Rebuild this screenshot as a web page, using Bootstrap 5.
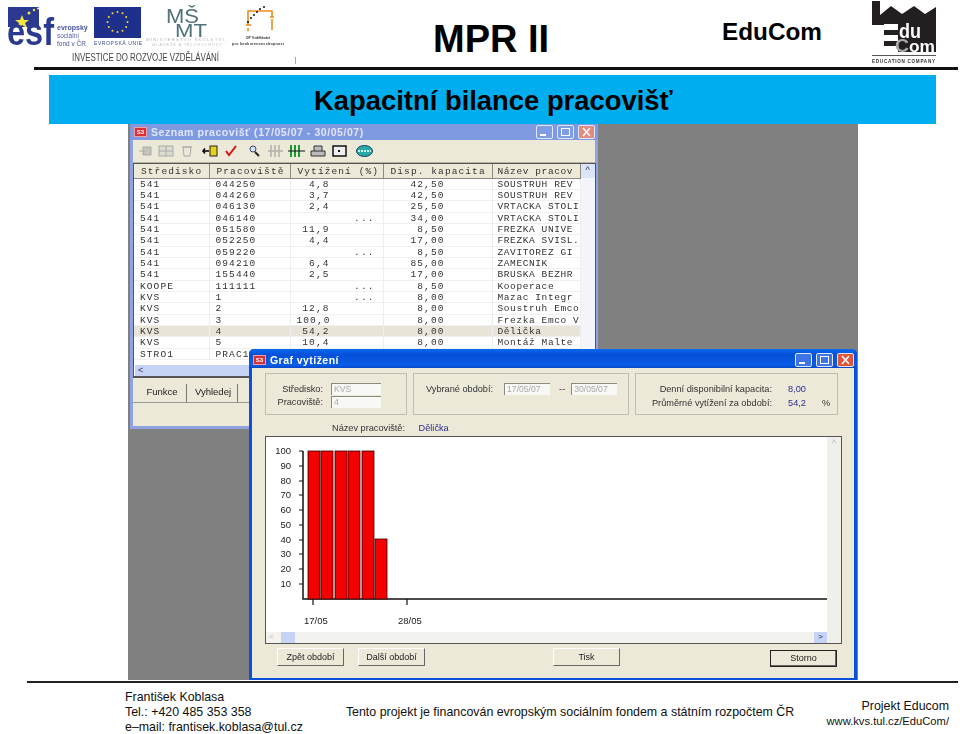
<!DOCTYPE html>
<html lang="cs">
<head>
    <meta charset="UTF-8">
    <title>Kapacitní bilance pracovišť</title>
    <link href="https://cdn.jsdelivr.net/npm/bootstrap@5.3.0/dist/css/bootstrap.min.css" rel="stylesheet">
    <style>
        body {
            background: #fff;
            color: #000;
            font-family: "Liberation Sans", Arial, sans-serif;
            width: 960px;
            height: 734px;
            overflow: hidden;
        }
        .top-strip { height: 67px; }
        .logo-strip { width: 300px; height: 67px; filter: blur(.45px); }
        .main-head { margin: 0 0 0 133px; font-size: 38px; font-weight: 700; line-height: 1; padding-top: 20px; width: 116px; white-space: nowrap; }
        .edu-head { margin-left: 173px; font-size: 24.3px; font-weight: 700; line-height: 1; padding-top: 20px; width: 100px; }
        .edu-logo { margin-left: 49px; width: 66px; height: 66px; filter: blur(.3px); }
        .head-line { height: 3px; background: #111; margin: 0 2px 0 34px; }
        .title-band {
            background: #00aeef;
            margin: 5px 24px 0 49px;
            height: 49px;
            padding-top: 2px;
            font-size: 27.4px;
            font-weight: 700;
            line-height: 1;
        }
        .title-band span { margin-left: 265px; }
        .desktop {
            position: relative;
            background: #808080;
            margin-left: 128px;
            width: 730px;
            height: 556px;
        }
        .win { position: absolute; background: #ece9d8; filter: blur(.35px); font-size: 9.2px; line-height: 12px; }
        .win-list { left: 2px; top: 0; width: 468px; height: 305px; border: solid #8fa3e0; border-width: 0 3px 3px; }
        .win-graph { left: 121px; top: 225px; width: 608px; height: 331px; border: solid #0a50d8; border-width: 0 3px 2px; border-radius: 5px 5px 0 0; }
        .bar-pale { height: 16px; background: #7f9ae0; color: #dfe6fa; font-size: 10.5px; font-weight: 700; letter-spacing: .55px; margin: 0 -3px; padding: 0 3px 0 4px; }
        .bar-live { height: 19px; background: linear-gradient(#0a6af0, #0550d8 30%, #0a5ce6 85%, #0546c8); color: #fff; font-size: 10.5px; font-weight: 700; letter-spacing: .45px; margin: 0 -3px; padding: 2px 3px 0 4px; border-radius: 5px 5px 0 0; }
        .app-ico { display: inline-block; width: 13px; height: 10px; background: #d8303a; border: 1px solid #f0a0a0; color: #fff; font-size: 6px; line-height: 8px; text-align: center; letter-spacing: 0; margin-right: 4px; }
        .win-btn { display: block; width: 17px; height: 14px; border-radius: 2px; background: #3f74e6; border: 1px solid #dfe8fb; }
        .win-btn svg { display: block; }
        .win-btn.cl { background: #e0563a; }
        .win-list .win-btn { background: #7f9de6; }
        .win-list .win-btn.cl { background: #e08a80; }
        .tool-row { height: 23px; padding-left: 5px; border-bottom: 1px solid #b8b4a4; gap: 9px; }
        .list-box { position: relative; height: 215px; width: 463px; background: #fff; border: 1px solid #555; border-width: 1px 1px 2px 1px; overflow: hidden; }
        .list-grid {
            table-layout: fixed;
            border-collapse: collapse;
            width: 446px;
            align-self: flex-start;
            font-family: "Liberation Mono", "Courier New", monospace;
            font-size: 9.5px;
            line-height: 9px;
            letter-spacing: 1.1px;
            color: #333;
        }
        .list-grid th { height: 14px; background: #ece9d8; border: 1px solid #8a8a80; border-width: 0 1px 1px 0; font-weight: 400; padding: 1px 0 0 7px; white-space: nowrap; }
        .list-grid td { height: 11.35px; border-right: 1px solid #eee; border-bottom: 1px solid #f0f0f0; padding: 1px 0 0 6px; white-space: nowrap; }
        .list-grid .vt { text-align: right; padding-right: 53px; }
        .list-grid .vd { text-align: right; padding-right: 8px; }
        .list-grid .kp { text-align: right; padding-right: 47px; }
        .list-grid .nm { letter-spacing: .6px; padding-left: 5px; }
        .list-grid tr.sel td { background: #e8e4d8; }
        .scroll-v { width: 15px; background: #f3f5fb; }
        .scroll-up { height: 14px; background: #dbe5fa; color: #335; text-align: center; }
        .scroll-h { height: 11px; background: #c6d3f5; position: absolute; left: 1px; right: 0; bottom: 0; color: #335; font-size: 9px; line-height: 10px; padding-left: 3px; }
        .list-wrap { height: 201px; }
        .tab-row { padding: 6px 0 0 3px; border-bottom: 1px solid #999; height: 25px; }
        .tab-btn { width: 51px; height: 18px; line-height: 16px; padding-left: 2px; text-align: center; font-size: 9.5px; background: #ece9d8; border: solid #777; border-width: 0 1px 0 0; color: #222; }
        .group-row { padding: 5px 0 0 13px; gap: 6px; }
        .grp { height: 42px; border: 1px solid #c0bcae; color: #333; }
        .grp-a { width: 142px; padding: 9px 25px 0 0; }
        .grp-a > div { gap: 8px; margin-bottom: 1px; }
        .grp-b { width: 216px; padding: 9px 0 0 12px; }
        .grp-c { width: 203px; padding-top: 9px; }
        .grp-c > div { margin-bottom: 2px; }
        .fld { height: 12px; line-height: 11px; background: #f8f8f4; border: solid #8a8a80; border-width: 1px 0 0 1px; color: #aaa; padding-left: 2px; font-size: 8.6px; }
        .fld-a { width: 50px; }
        .fld-b { width: 46px; margin-left: 11px; }
        .dash-b { margin-left: 9px; margin-right: -5px; }
        .cell-val { width: 50px; color: #2c2c90; text-align: center; }
        .cell-unit { width: 15px; }
        .name-line { height: 21px; padding: 7px 0 0 80px; color: #333; }
        .name-val { color: #2c2c90; margin-left: 11px; }
        .chart-box { position: relative; margin-left: 13px; width: 577px; height: 208px; background: #fff; border: 1px solid #555; overflow: hidden; }
        .chart-box svg { display: block; }
        .chart-hbar { position: absolute; left: 0; right: 14px; bottom: 0; height: 11px; background: #f2f2ee; color: #bbb; font-size: 8px; line-height: 10px; padding: 0 3px; }
        .chart-thumb { position: absolute; left: 15px; top: 0; width: 14px; height: 11px; background: #c6d3f5; }
        .chart-next { position: absolute; right: 0; top: 0; width: 13px; height: 11px; background: #c6d3f5; color: #224; text-align: center; }
        .chart-vbar { position: absolute; right: 0; top: 0; bottom: 0; width: 14px; background: #f0f0ea; color: #bbb; text-align: center; }
        .act-row { padding: 4px 0 0 25px; }
        .act-btn { height: 18px; width: 67px; line-height: 16px; text-align: center; background: #ece9d8; border: 1px solid; border-color: #fff #666 #666 #fff; color: #222; font-size: 9px; }
        .act-next { margin-left: 14px; }
        .act-print { margin-left: 128px; }
        .act-def { border: 1px solid #222; box-shadow: inset -1px -1px 0 #666; margin: 2px 0 0 150px; height: 17px; line-height: 15px; }
        .foot-line { height: 2px; background: #222; margin: 1px 2px 0 27px; }
        .foot-row { font-size: 12.4px; line-height: 15px; padding: 7px 11px 0 125px; color: #111; white-space: nowrap; }
        .foot-mid { margin-left: 43px; padding-top: 15px; }
        .foot-end { margin-left: auto; text-align: right; padding-top: 9px; }
        .foot-end small { display: block; font-size: 11.2px; line-height: 14px; }
    </style>
</head>
<body>
    <div class="top-strip d-flex">
        <svg class="logo-strip flex-shrink-0" viewBox="0 0 300 67" font-family="Liberation Sans">
            <rect x="8" y="7" width="31" height="20" fill="#2b3a90"/>
            <polygon points="22,15 24,20 29,20 25,23 27,28 22,25 17,28 19,23 15,20 20,20" fill="#f5e63c"/>
            <circle cx="29" cy="13" r="1.5" fill="#f5e63c"/><circle cx="34" cy="10" r="1.2" fill="#f5e63c"/><circle cx="38" cy="8.5" r="1" fill="#fff"/>
            <text x="7" y="45" font-size="39" font-weight="700" fill="#2b3a90" textLength="47" lengthAdjust="spacingAndGlyphs">esf</text>
            <text x="57" y="30" font-size="7" font-weight="700" fill="#4a55a0">evropský</text>
            <text x="57" y="38" font-size="6.5" fill="#5a65a8">sociální</text>
            <text x="57" y="46" font-size="6.5" fill="#4a55a0">fond v ČR</text>
            <rect x="94" y="7" width="47" height="31" fill="#1f2f8c"/>
            <g fill="#f2de3a"><circle cx="117.5" cy="12" r="1"/><circle cx="122.5" cy="13.3" r="1"/><circle cx="126.2" cy="17" r="1"/><circle cx="127.5" cy="22" r="1"/><circle cx="126.2" cy="27" r="1"/><circle cx="122.5" cy="30.7" r="1"/><circle cx="117.5" cy="32" r="1"/><circle cx="112.5" cy="30.7" r="1"/><circle cx="108.8" cy="27" r="1"/><circle cx="107.5" cy="22" r="1"/><circle cx="108.8" cy="17" r="1"/><circle cx="112.5" cy="13.3" r="1"/></g>
            <text x="94" y="45" font-size="5" fill="#3a4a9a" textLength="48">EVROPSKÁ UNIE</text>
            <text x="166" y="23" font-size="20" fill="#4f7378" textLength="33" lengthAdjust="spacingAndGlyphs">MŠ</text>
            <text x="175" y="37" font-size="19" fill="#4f7378" textLength="32" lengthAdjust="spacingAndGlyphs">MT</text>
            <text x="146" y="41" font-size="4.4" fill="#b4b8b8" textLength="80">MINISTERSTVO ŠKOLSTVÍ,</text>
            <text x="152" y="46" font-size="4" fill="#c0c4c4" textLength="70">MLÁDEŽE A TĚLOVÝCHOVY</text>
            <path d="M248 25V11H272V17M246 25H251M270 17H274M272 19V30M248 28V31" fill="none" stroke="#ef8a1f" stroke-width="1.6"/>
            <g fill="#111"><circle cx="264" cy="7" r="1"/><circle cx="260" cy="9" r="1"/><circle cx="257" cy="12" r="1"/><circle cx="254" cy="15" r="1"/><circle cx="251" cy="18" r="1"/><circle cx="248" cy="22" r="1"/></g>
            <text x="258" y="39" font-size="3.6" font-weight="700" fill="#333" text-anchor="middle">OP Vzdělávání</text>
            <text x="258" y="44.5" font-size="3.6" font-weight="700" fill="#333" text-anchor="middle" textLength="52">pro konkurenceschopnost</text>
            <text x="72" y="61" font-size="10" fill="#444" textLength="147" lengthAdjust="spacingAndGlyphs">INVESTICE DO ROZVOJE VZDĚLÁVÁNÍ</text>
            <rect x="295" y="57" width="1" height="7" fill="#aaa"/>
        </svg>
        <h1 class="main-head">MPR II</h1>
        <div class="edu-head">EduCom</div>
        <svg class="edu-logo flex-shrink-0" viewBox="0 0 66 66" font-family="Liberation Sans">
            <path d="M1 1H9V15L20 6L31 14L43 6L54 14L65 7V52H1Z" fill="#231f20"/>
            <rect x="1" y="24" width="26" height="28" fill="#fff"/>
            <rect x="1" y="24" width="12" height="1" fill="#231f20"/>
            <rect x="13" y="30" width="14" height="5" fill="#231f20"/>
            <rect x="13" y="41" width="14" height="5" fill="#231f20"/>
            <text x="28" y="38" font-size="20" font-weight="700" fill="#fff" textLength="22" lengthAdjust="spacingAndGlyphs">du</text>
            <text x="24" y="52" font-size="19" font-weight="700" fill="#a8a8a8" textLength="14" lengthAdjust="spacingAndGlyphs">C</text>
            <text x="38" y="52" font-size="17" font-weight="700" fill="#fff" textLength="26" lengthAdjust="spacingAndGlyphs">om</text>
            <rect x="1" y="55" width="64" height="1" fill="#555"/>
            <text x="1" y="63" font-size="4.6" font-weight="700" fill="#333" textLength="63">EDUCATION COMPANY</text>
        </svg>
    </div>
    <div class="head-line"></div>
    <div class="title-band d-flex align-items-center"><span>Kapacitní bilance pracovišť</span></div>

    <div class="desktop">
        <div class="win win-list">
            <div class="bar-pale d-flex align-items-center">
                <span class="app-ico">S3</span><span>Seznam pracovišť (17/05/07 - 30/05/07)</span>
                <span class="d-flex gap-1 ms-auto">
                    <i class="win-btn"><svg width="15" height="12"><rect x="3" y="8" width="6" height="2" fill="#fff"/></svg></i>
                    <i class="win-btn"><svg width="15" height="12"><rect x="3.5" y="2.5" width="8" height="7" fill="none" stroke="#fff"/></svg></i>
                    <i class="win-btn cl"><svg width="15" height="12"><path d="M4 2L11 10M11 2L4 10" stroke="#fff" stroke-width="1.500"/></svg></i>
                </span>
            </div>
            <div class="tool-row d-flex align-items-center">
                <svg width="209" height="14" viewBox="0 0 209 14">
                    <path d="M1 7H7M5 3H13V11H5Z" fill="#c4c4bc" stroke="#aaa"/>
                    <rect x="21" y="2" width="14" height="10" fill="#dcdcd0" stroke="#aaa"/><path d="M21 7H35M28 2V12" stroke="#aaa"/>
                    <path d="M45 3H53L52 12H46ZM44 3H54" fill="none" stroke="#aaa"/>
                    <path d="M65 7H71M67 4.500L65 7L67 9.500" fill="none" stroke="#000" stroke-width="1.500"/><rect x="72" y="2" width="7" height="10" fill="#e8d020" stroke="#222"/>
                    <path d="M88 7L91 11L98 2" fill="none" stroke="#d01818" stroke-width="2"/>
                    <circle cx="115" cy="5" r="3" fill="#cfe6f5" stroke="#446"/><path d="M117 8L121 12" stroke="#222" stroke-width="2"/>
                    <path d="M133 1V13M137 1V13M141 1V13M130 7H145" stroke="#b0b0a8" stroke-width="1.500"/>
                    <path d="M153 1V13M157 1V13M161 1V13" stroke="#1a9a30" stroke-width="2"/><path d="M150 7H167" stroke="#111"/>
                    <path d="M173 7H187V12H173ZM176 7V2H184V7" fill="#bbb" stroke="#333"/>
                    <rect x="195" y="2" width="13" height="10" fill="#eee" stroke="#111" stroke-width="1.500"/><rect x="200" y="6" width="2" height="2" fill="#111"/>
                </svg>
                <svg width="17" height="12" viewBox="0 0 17 12"><ellipse cx="8.500" cy="6" rx="8" ry="5.500" fill="#2aa8a8" stroke="#146"/><path d="M2 6H15" stroke="#cfe" stroke-width="2" stroke-dasharray="2 1"/></svg>
            </div>
            <div class="list-box">
                <div class="list-wrap d-flex">
                    <table class="list-grid">
                        <colgroup><col style="width:75px"><col style="width:81px"><col style="width:93px"><col style="width:109px"><col style="width:88px"></colgroup>
                        <thead><tr><th>Středisko</th><th>Pracoviště</th><th>Vytížení (%)</th><th>Disp. kapacita</th><th class="nm">Název pracov</th></tr></thead>
                        <tbody>
                            <tr><td>541</td><td>044250</td><td class="vt">4,8</td><td class="kp">42,50</td><td class="nm">SOUSTRUH REV</td></tr>
                            <tr><td>541</td><td>044260</td><td class="vt">3,7</td><td class="kp">42,50</td><td class="nm">SOUSTRUH REV</td></tr>
                            <tr><td>541</td><td>046130</td><td class="vt">2,4</td><td class="kp">25,50</td><td class="nm">VRTACKA STOLI</td></tr>
                            <tr><td>541</td><td>046140</td><td class="vd">...</td><td class="kp">34,00</td><td class="nm">VRTACKA STOLI</td></tr>
                            <tr><td>541</td><td>051580</td><td class="vt">11,9</td><td class="kp">8,50</td><td class="nm">FREZKA UNIVE</td></tr>
                            <tr><td>541</td><td>052250</td><td class="vt">4,4</td><td class="kp">17,00</td><td class="nm">FREZKA SVISL.</td></tr>
                            <tr><td>541</td><td>059220</td><td class="vd">...</td><td class="kp">8,50</td><td class="nm">ZAVITOREZ GI</td></tr>
                            <tr><td>541</td><td>094210</td><td class="vt">6,4</td><td class="kp">85,00</td><td class="nm">ZAMECNIK</td></tr>
                            <tr><td>541</td><td>155440</td><td class="vt">2,5</td><td class="kp">17,00</td><td class="nm">BRUSKA BEZHR</td></tr>
                            <tr><td>KOOPE</td><td>111111</td><td class="vd">...</td><td class="kp">8,50</td><td class="nm">Kooperace</td></tr>
                            <tr><td>KVS</td><td>1</td><td class="vd">...</td><td class="kp">8,00</td><td class="nm">Mazac Integr</td></tr>
                            <tr><td>KVS</td><td>2</td><td class="vt">12,8</td><td class="kp">8,00</td><td class="nm">Soustruh Emco</td></tr>
                            <tr><td>KVS</td><td>3</td><td class="vt">100,0</td><td class="kp">8,00</td><td class="nm">Frezka Emco V</td></tr>
                            <tr class="sel"><td>KVS</td><td>4</td><td class="vt">54,2</td><td class="kp">8,00</td><td class="nm">Dělička</td></tr>
                            <tr><td>KVS</td><td>5</td><td class="vt">10,4</td><td class="kp">8,00</td><td class="nm">Montáž Malte</td></tr>
                            <tr><td>STRO1</td><td>PRAC1</td><td></td><td></td><td></td></tr>
                        </tbody>
                    </table>
                    <div class="scroll-v"><div class="scroll-up">^</div></div>
                </div>
                <div class="scroll-h">&lt;</div>
            </div>
            <div class="tab-row d-flex">
                <div class="tab-btn">Funkce</div>
                <div class="tab-btn">Vyhledej</div>
                <div class="tab-btn">N</div>
            </div>
        </div>

        <div class="win win-graph">
            <div class="bar-live d-flex align-items-center">
                <span class="app-ico">S3</span><span>Graf vytížení</span>
                <span class="d-flex gap-1 ms-auto">
                    <i class="win-btn"><svg width="15" height="12"><rect x="3" y="8" width="6" height="2" fill="#fff"/></svg></i>
                    <i class="win-btn"><svg width="15" height="12"><rect x="3.5" y="2.5" width="8" height="7" fill="none" stroke="#fff"/></svg></i>
                    <i class="win-btn cl"><svg width="15" height="12"><path d="M4 2L11 10M11 2L4 10" stroke="#fff" stroke-width="1.500"/></svg></i>
                </span>
            </div>
            <div class="group-row d-flex">
                <div class="grp grp-a">
                    <div class="d-flex justify-content-end"><span>Středisko:</span><span class="fld fld-a">KVS</span></div>
                    <div class="d-flex justify-content-end"><span>Pracoviště:</span><span class="fld fld-a">4</span></div>
                </div>
                <div class="grp grp-b d-flex align-items-start">
                    <span>Vybrané období:</span><span class="fld fld-b">17/05/07</span><span class="dash-b">--</span><span class="fld fld-b">30/05/07</span>
                </div>
                <div class="grp grp-c">
                    <div class="d-flex"><span class="text-end flex-fill">Denní disponibilní kapacita:</span><span class="cell-val">8,00</span><span class="cell-unit"></span></div>
                    <div class="d-flex"><span class="text-end flex-fill">Průměrné vytížení za období:</span><span class="cell-val">54,2</span><span class="cell-unit">%</span></div>
                </div>
            </div>
            <div class="name-line">Název pracoviště: <span class="name-val">Dělička</span></div>
            <div class="chart-box">
                <svg width="575" height="206" viewBox="0 0 575 206" font-family="Liberation Sans" font-size="9.500" fill="#222">
                    <path d="M37 14V162H561" fill="none" stroke="#111" stroke-width="1.500"/>
                    <g stroke="#111" stroke-width="1.200">
                        <path d="M33 14H37M33 29H37M33 44H37M33 58H37M33 73H37M33 88H37M33 103H37M33 117H37M33 132H37M33 147H37M47 162V168M141 162V168"/>
                    </g>
                    <g fill="#f30000" stroke="#300" stroke-width=".8">
                        <rect x="42" y="14" width="12" height="148"/>
                        <rect x="55" y="14" width="12" height="148"/>
                        <rect x="69" y="14" width="12" height="148"/>
                        <rect x="82" y="14" width="12" height="148"/>
                        <rect x="96" y="14" width="12" height="148"/>
                        <rect x="109" y="102" width="12" height="60"/>
                    </g>
                    <g text-anchor="end">
                        <text x="25" y="17">100</text><text x="25" y="32">90</text><text x="25" y="47">80</text><text x="25" y="61">70</text><text x="25" y="76">60</text><text x="25" y="91">50</text><text x="25" y="106">40</text><text x="25" y="120">30</text><text x="25" y="135">20</text><text x="25" y="150">10</text>
                    </g>
                    <text x="38" y="187">17/05</text>
                    <text x="132" y="187">28/05</text>
                </svg>
                <div class="chart-vbar">^</div>
                <div class="chart-hbar">&lt;<span class="chart-thumb"></span><span class="chart-next">&gt;</span></div>
            </div>
            <div class="act-row d-flex">
                <div class="act-btn">Zpět období</div>
                <div class="act-btn act-next">Další období</div>
                <div class="act-btn act-print">Tisk</div>
                <div class="act-btn act-def">Storno</div>
            </div>
        </div>
    </div>

    <div class="foot-line"></div>
    <div class="foot-row d-flex">
        <div>František Koblasa<br>Tel.: +420 485 353 358<br>e–mail: frantisek.koblasa@tul.cz</div>
        <div class="foot-mid">Tento projekt je financován evropským sociálním fondem a státním rozpočtem ČR</div>
        <div class="foot-end">Projekt Educom<small>www.kvs.tul.cz/EduCom/</small></div>
    </div>
</body>
</html>
